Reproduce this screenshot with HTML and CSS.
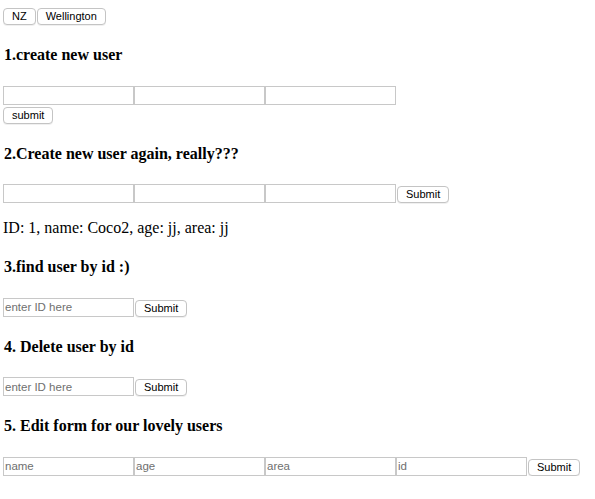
FILE: index.html
```html
<!DOCTYPE html>
<html>
<head>
<meta charset="utf-8">
<link rel="stylesheet" href="styles.css">
</head>
<body>
<div class="row"><button class="btn">NZ</button><button class="btn">Wellington</button></div>
<h4 class="title">1.create new user</h4>
<form class="form-stack">
  <div class="row"><input class="field" type="text"><input class="field" type="text"><input class="field" type="text"></div>
  <div class="row"><button class="btn" type="button">submit</button></div>
</form>
<h4 class="title">2.Create new user again, really???</h4>
<form class="row first">
  <input class="field" type="text"><input class="field" type="text"><input class="field" type="text"><button class="btn gap" type="button">Submit</button>
</form>
<p class="result">ID: 1, name: Coco2, age: jj, area: jj</p>
<h4 class="title">3.find user by id :)</h4>
<form class="row first">
  <input class="field" type="text" placeholder="enter ID here"><button class="btn gap" type="button">Submit</button>
</form>
<h4 class="title">4. Delete user by id</h4>
<form class="row first">
  <input class="field" type="text" placeholder="enter ID here"><button class="btn gap" type="button">Submit</button>
</form>
<h4 class="title">5. Edit form for our lovely users</h4>
<form class="row first">
  <input class="field" type="text" placeholder="name"><input class="field" type="text" placeholder="age"><input class="field" type="text" placeholder="area"><input class="field" type="text" placeholder="id"><button class="btn gap" type="button">Submit</button>
</form>
</body>
</html>
```
FILE: styles.css
```css
html, body {
  background: #fff;
}
body {
  margin: 8px 3px;
  font-family: "Liberation Serif", "Times New Roman", serif;
  color: #000;
}
.row {
  display: flex;
  align-items: flex-end;
}
.form-stack {
  margin: 0;
}
.first {
  margin: 0;
}
.title {
  font-size: 16px;
  font-weight: bold;
  line-height: 18px;
  margin: 21.28px 0 21.28px 1px;
}
.btn {
  font-family: "Liberation Sans", Arial, sans-serif;
  font-size: 11px;
  height: 17px;
  line-height: 15px;
  padding: 0 8px;
  margin: 0 1px 0 0;
  border: 1px solid #c4c4c4;
  border-radius: 4px;
  background: #fff;
  color: #000;
  box-shadow: 0 1px 0 rgba(0,0,0,0.06);
}
.btn.gap {
  margin-left: 1px;
}
.form-stack .row + .row {
  margin-top: 2px;
}
.field {
  box-sizing: border-box;
  width: 131px;
  height: 19px;
  margin: 0;
  padding: 0 1px;
  border: 1px solid #c8c8c8;
  font-family: "Liberation Sans", Arial, sans-serif;
  font-size: 11.5px;
  background: #fff;
}
.field::placeholder {
  color: #6f6f6f;
}
.result {
  font-size: 16px;
  line-height: 18px;
  margin: 16px 0 0 0;
}
```
